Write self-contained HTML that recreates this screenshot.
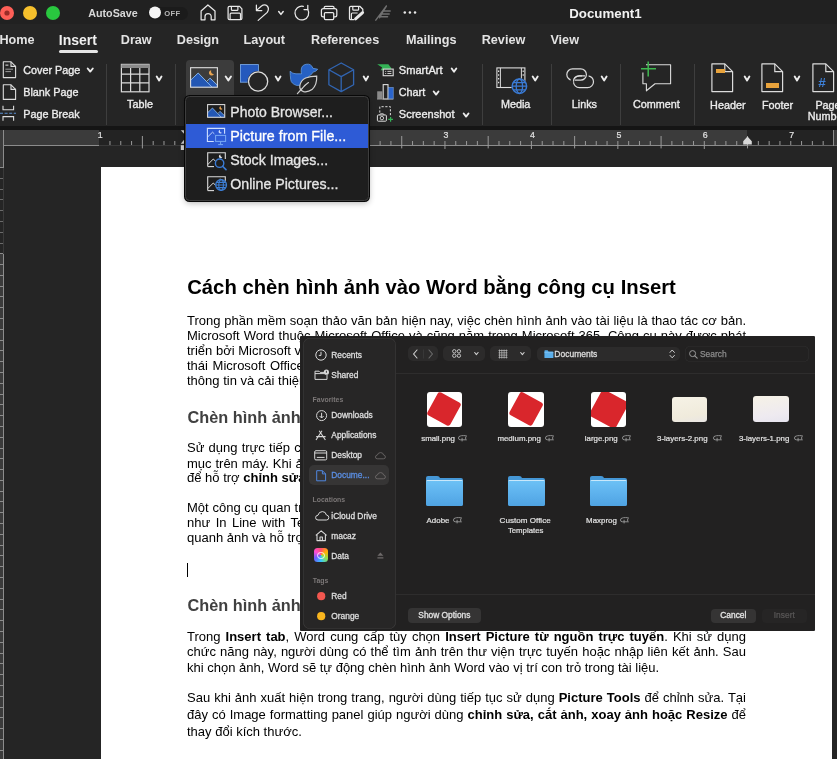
<!DOCTYPE html>
<html><head><meta charset="utf-8"><style>
html,body{margin:0;padding:0;}
body{width:837px;height:759px;overflow:hidden;position:relative;background:#252525;font-family:"Liberation Sans",sans-serif;}
.t{position:absolute;white-space:nowrap;}
svg{overflow:visible;}
</style></head><body>
<div id="w" style="position:absolute;left:0;top:0;width:837px;height:759px;overflow:hidden;will-change:transform;">
<div style="position:absolute;left:0px;top:0px;width:837px;height:24px;background:#212121;"></div>
<svg style="position:absolute;left:0px;top:0px;" width="70" height="27" viewBox="0 0 70 27">
<circle cx="7" cy="13" r="7" fill="#fe5f57"/>
<circle cx="7" cy="13" r="2.6" fill="#9a2c27"/>
<circle cx="30" cy="13" r="7" fill="#f6c02c"/>
<circle cx="53" cy="13" r="7" fill="#29c73f"/>
</svg>
<div class="t" style="left:88.20px;top:8.20px;font-size:10.75px;line-height:10.75px;font-weight:700;color:#d8d8d8;">AutoSave</div>
<div style="position:absolute;left:147.5px;top:6.5px;width:40.0px;height:13.3px;background:#1b1b1b;border-radius:7px;"></div>
<svg style="position:absolute;left:148px;top:6.4px;" width="14" height="13" viewBox="0 0 14 13"><circle cx="7" cy="6.5" r="6" fill="#f4f4f4"/></svg>
<div class="t" style="left:164.30px;top:9.77px;font-size:7.6px;line-height:7.6px;font-weight:700;color:#b8b8b8;letter-spacing:0.3px;">OFF</div>
<svg style="position:absolute;left:0px;top:0px;" width="1" height="1" viewBox="0 0 1 1"><path d="M201.1 19.8 L201.1 11 L207.9 5 L215 11 L215 19.8 L211.2 19.8 L211.2 16.6 A3.1 3.1 0 0 0 205 16.6 L205 19.8 Z" fill="none" stroke="#e8e8e8" stroke-width="1.25" stroke-linejoin="round"/></svg>
<svg style="position:absolute;left:0px;top:0px;" width="1" height="1" viewBox="0 0 1 1"><path d="M229.6 6.3 L239.6 6.3 L241.9 8.8 L241.9 18.3 Q241.9 19.7 240.5 19.7 L229.6 19.7 Q228.1 19.7 228.1 18.3 L228.1 7.8 Q228.1 6.3 229.6 6.3 Z" fill="none" stroke="#e8e8e8" stroke-width="1.25" stroke-linejoin="round"/><path d="M231.4 6.3 L231.4 9.4 Q231.4 10.3 232.3 10.3 L237 10.3 Q237.9 10.3 237.9 9.4 L237.9 6.3" fill="none" stroke="#e8e8e8" stroke-width="1.2"/><path d="M230.1 19.7 L230.1 14.2 Q230.1 13.2 231.1 13.2 L239.5 13.2 Q240.5 13.2 240.5 14.2 L240.5 19.7" fill="none" stroke="#e8e8e8" stroke-width="1.2"/></svg>
<svg style="position:absolute;left:0px;top:0px;" width="1" height="1" viewBox="0 0 1 1"><path d="M256.4 5.2 L256.4 10.5 L261.8 10.5" fill="none" stroke="#e8e8e8" stroke-width="1.25" stroke-linecap="round" stroke-linejoin="round"/><path d="M256.8 10.1 L261.2 6.2 Q264.6 3.8 267.2 6 Q269.6 8.6 267.2 12.4 L258.2 20.4" fill="none" stroke="#e8e8e8" stroke-width="1.25" stroke-linecap="round"/></svg>
<svg style="position:absolute;left:277.2px;top:10.4px;" width="7.900000000000034" height="5.799999999999999" viewBox="0 0 7.900000000000034 5.799999999999999"><path d="M1.7 1.5 L3.950000000000017 4.399999999999999 L6.200000000000034 1.5" fill="none" stroke="#e8e8e8" stroke-width="1.5" stroke-linecap="round" stroke-linejoin="round"/></svg>
<svg style="position:absolute;left:0px;top:0px;" width="1" height="1" viewBox="0 0 1 1"><path d="M303.3 6.3 A6.9 6.9 0 1 0 307.8 9.5" fill="none" stroke="#e8e8e8" stroke-width="1.25" stroke-linecap="round"/><path d="M307.8 5.3 L307.8 9.5 L304 9.5" fill="none" stroke="#e8e8e8" stroke-width="1.25" stroke-linecap="round" stroke-linejoin="round"/></svg>
<svg style="position:absolute;left:0px;top:0px;" width="1" height="1" viewBox="0 0 1 1"><path d="M324.2 8.5 L324.2 7.6 Q324.2 6.3 325.5 6.3 L332.7 6.3 Q334 6.3 334 7.6 L334 8.5" fill="none" stroke="#e8e8e8" stroke-width="1.25"/><path d="M324.3 16.8 L323.3 16.8 Q321.4 16.8 321.4 14.9 L321.4 10.5 Q321.4 8.5 323.4 8.5 L334.8 8.5 Q336.8 8.5 336.8 10.5 L336.8 14.9 Q336.8 16.8 334.9 16.8 L333.8 16.8" fill="none" stroke="#e8e8e8" stroke-width="1.25"/><rect x="324.4" y="12.5" width="9.3" height="7.1" rx="1" fill="none" stroke="#e8e8e8" stroke-width="1.25"/></svg>
<svg style="position:absolute;left:0px;top:0px;" width="1" height="1" viewBox="0 0 1 1"><path d="M354.4 19.7 L350.8 19.7 Q349.5 19.7 349.5 18.4 L349.5 7.6 Q349.5 6.3 350.8 6.3 L359.8 6.3 L362.8 9.3 L362.8 11.6" fill="none" stroke="#e8e8e8" stroke-width="1.25" stroke-linejoin="round"/><path d="M352.8 6.3 L352.8 9.4 Q352.8 10.2 353.6 10.2 L357.8 10.2 Q358.6 10.2 358.6 9.4 L358.6 6.3" fill="none" stroke="#e8e8e8" stroke-width="1.2"/><path d="M351.4 19.7 L351.4 14 Q351.4 13 352.4 13 L357.6 13" fill="none" stroke="#e8e8e8" stroke-width="1.2"/><path d="M355.6 18.8 L362.6 12.6" stroke="#e8e8e8" stroke-width="3" stroke-linecap="round"/></svg>
<svg style="position:absolute;left:0px;top:0px;" width="1" height="1" viewBox="0 0 1 1"><path d="M375.8 20.2 L386.4 6 M386.4 6 Q383 11 379.6 17.8 M382.8 11 L390.2 11 M381.2 14 L389.2 14 M379.6 16.8 L387.6 16.8" fill="none" stroke="#707070" stroke-width="1.4" stroke-linecap="round"/></svg>
<svg style="position:absolute;left:0px;top:0px;" width="1" height="1" viewBox="0 0 1 1"><circle cx="404.8" cy="12.6" r="1.25" fill="#e8e8e8"/><circle cx="409.9" cy="12.6" r="1.25" fill="#e8e8e8"/><circle cx="415" cy="12.6" r="1.25" fill="#e8e8e8"/></svg>
<div class="t" style="left:569.20px;top:6.74px;font-size:13.3px;line-height:13.3px;font-weight:700;color:#f2f2f2;">Document1</div>
<div class="t" style="left:-0.60px;top:33.89px;font-size:12.65px;line-height:12.65px;font-weight:700;color:#e3e3e3;">Home</div>
<div class="t" style="left:58.80px;top:32.75px;font-size:14.0px;line-height:14.0px;font-weight:700;color:#f0f0f0;">Insert</div>
<div class="t" style="left:120.80px;top:33.89px;font-size:12.65px;line-height:12.65px;font-weight:700;color:#e3e3e3;">Draw</div>
<div class="t" style="left:176.80px;top:33.89px;font-size:12.65px;line-height:12.65px;font-weight:700;color:#e3e3e3;">Design</div>
<div class="t" style="left:243.60px;top:33.89px;font-size:12.65px;line-height:12.65px;font-weight:700;color:#e3e3e3;">Layout</div>
<div class="t" style="left:311.00px;top:33.89px;font-size:12.65px;line-height:12.65px;font-weight:700;color:#e3e3e3;">References</div>
<div class="t" style="left:406.00px;top:33.89px;font-size:12.65px;line-height:12.65px;font-weight:700;color:#e3e3e3;">Mailings</div>
<div class="t" style="left:481.70px;top:33.89px;font-size:12.65px;line-height:12.65px;font-weight:700;color:#e3e3e3;">Review</div>
<div class="t" style="left:550.40px;top:33.89px;font-size:12.65px;line-height:12.65px;font-weight:700;color:#e3e3e3;">View</div>
<div style="position:absolute;left:59px;top:50px;width:39px;height:2.799999999999997px;background:#e6e6e6;border-radius:1.5px;"></div>
<div style="position:absolute;left:106.0px;top:63.5px;width:1.0px;height:61.5px;background:#3e3e3e;"></div>
<div style="position:absolute;left:175.1px;top:63.5px;width:1.0px;height:61.5px;background:#3e3e3e;"></div>
<div style="position:absolute;left:482.0px;top:63.5px;width:1.0px;height:61.5px;background:#3e3e3e;"></div>
<div style="position:absolute;left:551.1px;top:63.5px;width:1.0px;height:61.5px;background:#3e3e3e;"></div>
<div style="position:absolute;left:620.4px;top:63.5px;width:1.0px;height:61.5px;background:#3e3e3e;"></div>
<div style="position:absolute;left:694.0px;top:63.5px;width:1.0px;height:61.5px;background:#3e3e3e;"></div>
<svg style="position:absolute;left:2px;top:61px;" width="15" height="18" viewBox="0 0 15 18"><path d="M1.3 0.8 L9 0.8 L13.6 5.4 L13.6 16.6 L1.3 16.6 Z" fill="none" stroke="#dcdcdc" stroke-width="1.1" stroke-linejoin="round"/><path d="M9 0.8 L9 5.4 L13.6 5.4" fill="none" stroke="#dcdcdc" stroke-width="1.1"/><rect x="3.4" y="3.4" width="3" height="1.6" fill="#9a9a9a"/><path d="M3.4 8.2 L11 8.2 M3.4 10.6 L9 10.6" stroke="#9a9a9a" stroke-width="1"/></svg>
<div class="t" style="left:23.20px;top:64.56px;font-size:10.8px;line-height:10.8px;font-weight:400;color:#ececec;-webkit-text-stroke:0.35px #ececec;">Cover Page</div>
<svg style="position:absolute;left:85.7px;top:67.3px;" width="8.5" height="6.0" viewBox="0 0 8.5 6.0"><path d="M1.7 1.5 L4.25 4.6 L6.8 1.5" fill="none" stroke="#ececec" stroke-width="1.9" stroke-linecap="round" stroke-linejoin="round"/></svg>
<svg style="position:absolute;left:2px;top:84px;" width="15" height="17" viewBox="0 0 15 17"><path d="M1.3 0.8 L9 0.8 L13.6 5.4 L13.6 15.4 L1.3 15.4 Z" fill="none" stroke="#dcdcdc" stroke-width="1.1" stroke-linejoin="round"/><path d="M9 0.8 L9 5.4 L13.6 5.4" fill="none" stroke="#dcdcdc" stroke-width="1.1"/></svg>
<div class="t" style="left:23.20px;top:87.36px;font-size:10.8px;line-height:10.8px;font-weight:400;color:#ececec;-webkit-text-stroke:0.35px #ececec;">Blank Page</div>
<svg style="position:absolute;left:0px;top:105px;" width="17" height="17" viewBox="0 0 17 17"><path d="M3 0.8 L3 4.8 L13.6 4.8 L13.6 0.8 M3 15.8 L3 11.6 L13.6 11.6 L13.6 15.8" fill="none" stroke="#dcdcdc" stroke-width="1.1"/><path d="M0 8.2 L16 8.2" stroke="#5b8fd0" stroke-width="1.1" stroke-dasharray="3 1.6"/></svg>
<div class="t" style="left:23.20px;top:109.16px;font-size:10.8px;line-height:10.8px;font-weight:400;color:#ececec;-webkit-text-stroke:0.35px #ececec;">Page Break</div>
<svg style="position:absolute;left:120px;top:63px;" width="31" height="30" viewBox="0 0 31 30"><rect x="1.4" y="1.4" width="27.6" height="27.4" fill="none" stroke="#dcdcdc" stroke-width="1.2"/><rect x="1.4" y="1.4" width="27.6" height="3.6" fill="#8a8a8a"/><path d="M1.4 11.2 L29 11.2 M1.4 19.8 L29 19.8 M10.6 5 L10.6 28.8 M19.8 5 L19.8 28.8" stroke="#dcdcdc" stroke-width="1.2"/></svg>
<svg style="position:absolute;left:155px;top:75px;" width="8.199999999999989" height="6.799999999999997" viewBox="0 0 8.199999999999989 6.799999999999997"><path d="M1.7 1.5 L4.099999999999994 5.399999999999997 L6.4999999999999885 1.5" fill="none" stroke="#ececec" stroke-width="1.9" stroke-linecap="round" stroke-linejoin="round"/></svg>
<div class="t" style="left:127.10px;top:99.16px;font-size:10.8px;line-height:10.8px;font-weight:400;color:#ececec;-webkit-text-stroke:0.35px #ececec;">Table</div>
<div style="position:absolute;left:186px;top:60px;width:48px;height:37px;background:#3c3c3c;border-radius:4px 4px 0 0;"></div>
<svg style="position:absolute;left:0px;top:0px;" width="1" height="1" viewBox="0 0 1 1"><path d="M205.6 87.2 L210.1 78.2 L217.4 85.2 L217.4 87.2 Z" fill="#2357b4"/><path d="M206.5 81.5 L210.1 78.2 L217.4 85.2" fill="none" stroke="#8fc0f5" stroke-width="0.9"/><path d="M190.6 80.2 L198.2 73 L212 87.2 L190.6 87.2 Z" fill="#2357b4"/><path d="M190.6 80.2 L198.2 73 L212 87.2" fill="none" stroke="#8fc0f5" stroke-width="0.9"/><rect x="190.6" y="67.7" width="26.8" height="19.5" fill="none" stroke="#e0e0e0" stroke-width="1.1"/><path d="M211.2 70.2 A2.7 2.7 0 1 0 213.9 74.3 A3.4 3.4 0 0 1 211.2 70.2 Z" fill="#e8a451"/></svg>
<svg style="position:absolute;left:223.6px;top:75px;" width="8.700000000000017" height="6.799999999999997" viewBox="0 0 8.700000000000017 6.799999999999997"><path d="M1.7 1.5 L4.3500000000000085 5.399999999999997 L7.000000000000017 1.5" fill="none" stroke="#ececec" stroke-width="1.9" stroke-linecap="round" stroke-linejoin="round"/></svg>
<svg style="position:absolute;left:239px;top:63px;" width="31" height="31" viewBox="0 0 31 31"><rect x="1.4" y="1.6" width="18" height="17.6" fill="#2559bd" stroke="#7fb0ee" stroke-width="0.8"/><circle cx="19.1" cy="18.5" r="10.6" fill="#252525"/><circle cx="19.1" cy="18.5" r="9.6" fill="none" stroke="#dcdcdc" stroke-width="1.3"/></svg>
<svg style="position:absolute;left:273.8px;top:75px;" width="8.199999999999989" height="6.799999999999997" viewBox="0 0 8.199999999999989 6.799999999999997"><path d="M1.7 1.5 L4.099999999999994 5.399999999999997 L6.4999999999999885 1.5" fill="none" stroke="#ececec" stroke-width="1.9" stroke-linecap="round" stroke-linejoin="round"/></svg>
<svg style="position:absolute;left:0px;top:0px;" width="1" height="1" viewBox="0 0 1 1"><path d="M290.1 71.2 Q292.5 73.8 296 73.8 L301.6 73.8 Q301 72.4 301.2 70.2 A6 6 0 0 1 312.9 68.3 L317.7 69.2 Q316 71.9 313 72.1 Q311.6 75 309.3 75.8 L305 83 Q300.4 86.3 296.6 85.4 Q291.2 83.8 290.7 79.6 Q290.2 75.4 290.1 71.2 Z" fill="#2661c4" stroke="#6aa6ee" stroke-width="0.7"/><path d="M316.7 76.2 Q317.2 84.6 312 89.6 Q308 92.4 303.6 91.6 Q299.4 90.2 299.8 86 Q300.6 80.4 305.6 78 Q310.4 76.2 316.7 76.2 Z" fill="#252525" stroke="#cfcfcf" stroke-width="1.2"/><path d="M297.4 93.6 L302.6 88 Q305 85 308.5 82.6" fill="none" stroke="#cfcfcf" stroke-width="1.2" stroke-linecap="round"/></svg>
<svg style="position:absolute;left:328px;top:62px;" width="27" height="31" viewBox="0 0 27 31"><path d="M13.2 1 L25.6 7.8 L25.6 22.8 L13.2 29.6 L0.9 22.8 L0.9 7.8 Z M0.9 7.8 L13.2 14.6 L25.6 7.8 M13.2 14.6 L13.2 29.6" fill="none" stroke="#3165b2" stroke-width="1.3" stroke-linejoin="round"/></svg>
<svg style="position:absolute;left:362px;top:75px;" width="7.800000000000011" height="6.799999999999997" viewBox="0 0 7.800000000000011 6.799999999999997"><path d="M1.7 1.5 L3.9000000000000057 5.399999999999997 L6.100000000000011 1.5" fill="none" stroke="#ececec" stroke-width="1.9" stroke-linecap="round" stroke-linejoin="round"/></svg>
<svg style="position:absolute;left:0px;top:0px;" width="1" height="1" viewBox="0 0 1 1"><path d="M377.2 64.3 L388.4 64.3 L391.6 68.6 L388.6 70.2 L380.6 70.2 L382.2 67.4 Z" fill="#34b356"/><rect x="383.2" y="69.1" width="10" height="6.6" fill="#252525" stroke="#dcdcdc" stroke-width="1.1"/><path d="M385.2 71.4 L386.2 71.4 M387.4 71.4 L391.4 71.4 M385.2 73.5 L386.2 73.5 M387.4 73.5 L391.4 73.5" stroke="#dcdcdc" stroke-width="0.9"/></svg>
<div class="t" style="left:398.80px;top:64.90px;font-size:11.1px;line-height:11.1px;font-weight:400;color:#ececec;-webkit-text-stroke:0.35px #ececec;">SmartArt</div>
<svg style="position:absolute;left:450px;top:67.4px;" width="8" height="6.199999999999989" viewBox="0 0 8 6.199999999999989"><path d="M1.7 1.5 L4.0 4.799999999999988 L6.3 1.5" fill="none" stroke="#ececec" stroke-width="1.9" stroke-linecap="round" stroke-linejoin="round"/></svg>
<svg style="position:absolute;left:0px;top:0px;" width="1" height="1" viewBox="0 0 1 1"><rect x="377.2" y="91.3" width="5" height="7.8" fill="#8a8a8a"/><rect x="383.2" y="84.6" width="4.8" height="14.4" fill="#252525" stroke="#dcdcdc" stroke-width="1.1"/><rect x="388.6" y="87.5" width="4.6" height="11.6" fill="#2a64cc" stroke="#8ab4ee" stroke-width="0.5"/><path d="M377 99.1 L393.3 99.1" stroke="#9a9a9a" stroke-width="0.8"/></svg>
<div class="t" style="left:398.80px;top:87.46px;font-size:10.8px;line-height:10.8px;font-weight:400;color:#ececec;-webkit-text-stroke:0.35px #ececec;">Chart</div>
<svg style="position:absolute;left:432.2px;top:90px;" width="8.199999999999989" height="6" viewBox="0 0 8.199999999999989 6"><path d="M1.7 1.5 L4.099999999999994 4.6 L6.4999999999999885 1.5" fill="none" stroke="#ececec" stroke-width="1.9" stroke-linecap="round" stroke-linejoin="round"/></svg>
<svg style="position:absolute;left:0px;top:0px;" width="1" height="1" viewBox="0 0 1 1"><path d="M379.8 112.6 L379.8 106.7 L390.4 106.7 L390.4 116.4" fill="none" stroke="#dcdcdc" stroke-width="1" stroke-dasharray="2.2 1.6"/><rect x="377.4" y="115" width="9" height="6.2" rx="0.8" fill="#252525" stroke="#dcdcdc" stroke-width="1"/><circle cx="381.9" cy="118.1" r="1.7" fill="none" stroke="#dcdcdc" stroke-width="0.9"/><path d="M379.6 115 L380.4 113.8 L383.4 113.8 L384.2 115" fill="none" stroke="#dcdcdc" stroke-width="0.9"/><path d="M390.6 117 L390.6 121.8 M388.2 119.4 L393 119.4" stroke="#34b356" stroke-width="1.2"/></svg>
<div class="t" style="left:398.80px;top:108.99px;font-size:11.0px;line-height:11.0px;font-weight:400;color:#ececec;-webkit-text-stroke:0.35px #ececec;">Screenshot</div>
<svg style="position:absolute;left:461.8px;top:112px;" width="8.199999999999989" height="6" viewBox="0 0 8.199999999999989 6"><path d="M1.7 1.5 L4.099999999999994 4.6 L6.4999999999999885 1.5" fill="none" stroke="#ececec" stroke-width="1.9" stroke-linecap="round" stroke-linejoin="round"/></svg>
<svg style="position:absolute;left:496px;top:67px;" width="33" height="29" viewBox="0 0 33 29"><rect x="0.9" y="0.9" width="28" height="19.6" fill="none" stroke="#dcdcdc" stroke-width="1.1"/><path d="M4.4 0.9 L4.4 20.5 M25.4 0.9 L25.4 20.5" stroke="#dcdcdc" stroke-width="1"/><path d="M2.6 3.6 L2.6 18" stroke="#dcdcdc" stroke-width="1.2" stroke-dasharray="1.5 2.2"/><path d="M27.2 3.6 L27.2 11" stroke="#dcdcdc" stroke-width="1.2" stroke-dasharray="1.5 2.2"/><circle cx="23.4" cy="19.2" r="8" fill="#252525"/><circle cx="23.4" cy="19.2" r="7.2" fill="none" stroke="#3a7bd5" stroke-width="1.5"/><ellipse cx="23.4" cy="19.2" rx="3.2" ry="7.2" fill="none" stroke="#3a7bd5" stroke-width="1.3"/><path d="M16.2 19.2 L30.6 19.2 M17.2 15.6 L29.6 15.6 M17.2 22.8 L29.6 22.8" stroke="#3a7bd5" stroke-width="1.2"/></svg>
<svg style="position:absolute;left:530.8px;top:75px;" width="8.400000000000091" height="6.799999999999997" viewBox="0 0 8.400000000000091 6.799999999999997"><path d="M1.7 1.5 L4.2000000000000455 5.399999999999997 L6.700000000000091 1.5" fill="none" stroke="#ececec" stroke-width="1.9" stroke-linecap="round" stroke-linejoin="round"/></svg>
<div class="t" style="left:500.90px;top:99.16px;font-size:10.8px;line-height:10.8px;font-weight:400;color:#ececec;-webkit-text-stroke:0.35px #ececec;">Media</div>
<svg style="position:absolute;left:0px;top:0px;" width="1" height="1" viewBox="0 0 1 1"><rect x="573.5" y="75.8" width="20" height="11.8" rx="5.9" fill="none" stroke="#dcdcdc" stroke-width="1.2"/><rect x="585" y="73.6" width="3.6" height="3.8" fill="#252525"/><rect x="566.8" y="68.8" width="19.6" height="11.4" rx="5.7" fill="none" stroke="#dcdcdc" stroke-width="1.2"/><rect x="570.6" y="78.6" width="4.2" height="3.6" fill="#252525"/><path d="M573.5 81.7 Q573.5 75.8 579.4 75.8 L582 75.8" fill="none" stroke="#dcdcdc" stroke-width="1.2"/></svg>
<svg style="position:absolute;left:599.7px;top:75px;" width="8.299999999999955" height="6.799999999999997" viewBox="0 0 8.299999999999955 6.799999999999997"><path d="M1.7 1.5 L4.149999999999977 5.399999999999997 L6.599999999999954 1.5" fill="none" stroke="#ececec" stroke-width="1.9" stroke-linecap="round" stroke-linejoin="round"/></svg>
<div class="t" style="left:571.80px;top:99.16px;font-size:10.8px;line-height:10.8px;font-weight:400;color:#ececec;-webkit-text-stroke:0.35px #ececec;">Links</div>
<svg style="position:absolute;left:640px;top:61px;" width="33" height="32" viewBox="0 0 33 32"><path d="M6 3.8 L30.6 3.8 L30.6 22.8 L15 22.8 L6.4 29.8 L6.4 22.8 L2.9 22.8 L2.9 11.6" fill="none" stroke="#dcdcdc" stroke-width="1.1" stroke-linejoin="round"/><path d="M1 7.8 L16 7.8 M8.2 0.6 L8.2 15.6" stroke="#3fb850" stroke-width="1.5"/></svg>
<div class="t" style="left:632.90px;top:99.16px;font-size:10.8px;line-height:10.8px;font-weight:400;color:#ececec;-webkit-text-stroke:0.35px #ececec;">Comment</div>
<svg style="position:absolute;left:711px;top:63px;" width="23" height="30" viewBox="0 0 23 30"><path d="M0.9 0.9 L13.8 0.9 L21.6 8.6 L21.6 28.6 L0.9 28.6 Z" fill="none" stroke="#dcdcdc" stroke-width="1.2" stroke-linejoin="round"/><path d="M13.8 0.9 L13.8 8.6 L21.6 8.6" fill="none" stroke="#dcdcdc" stroke-width="1.2"/></svg>
<div style="position:absolute;left:716px;top:68.8px;width:8.799999999999955px;height:4.0px;background:#e8a33c;"></div>
<svg style="position:absolute;left:742.9px;top:75.3px;" width="8.100000000000023" height="6.900000000000006" viewBox="0 0 8.100000000000023 6.900000000000006"><path d="M1.7 1.5 L4.050000000000011 5.500000000000005 L6.400000000000023 1.5" fill="none" stroke="#ececec" stroke-width="1.9" stroke-linecap="round" stroke-linejoin="round"/></svg>
<div class="t" style="left:710.10px;top:99.66px;font-size:10.8px;line-height:10.8px;font-weight:400;color:#ececec;-webkit-text-stroke:0.35px #ececec;">Header</div>
<svg style="position:absolute;left:761.2px;top:63px;" width="23" height="30" viewBox="0 0 23 30"><path d="M0.9 0.9 L13.8 0.9 L21.6 8.6 L21.6 28.6 L0.9 28.6 Z" fill="none" stroke="#dcdcdc" stroke-width="1.2" stroke-linejoin="round"/><path d="M13.8 0.9 L13.8 8.6 L21.6 8.6" fill="none" stroke="#dcdcdc" stroke-width="1.2"/></svg>
<div style="position:absolute;left:766.3px;top:83.2px;width:13.200000000000045px;height:4.599999999999994px;background:#e8a33c;"></div>
<svg style="position:absolute;left:793px;top:75.3px;" width="8" height="6.900000000000006" viewBox="0 0 8 6.900000000000006"><path d="M1.7 1.5 L4.0 5.500000000000005 L6.3 1.5" fill="none" stroke="#ececec" stroke-width="1.9" stroke-linecap="round" stroke-linejoin="round"/></svg>
<div class="t" style="left:762.00px;top:99.66px;font-size:10.8px;line-height:10.8px;font-weight:400;color:#ececec;-webkit-text-stroke:0.35px #ececec;">Footer</div>
<svg style="position:absolute;left:811.5px;top:63px;" width="23" height="30" viewBox="0 0 23 30"><path d="M0.9 0.9 L13.8 0.9 L21.6 8.6 L21.6 28.6 L0.9 28.6 Z" fill="none" stroke="#dcdcdc" stroke-width="1.2" stroke-linejoin="round"/><path d="M13.8 0.9 L13.8 8.6 L21.6 8.6" fill="none" stroke="#dcdcdc" stroke-width="1.2"/></svg>
<div class="t" style="left:818.20px;top:76.17px;font-size:13.5px;line-height:13.5px;font-weight:700;color:#3d7fd6;">#</div>
<div class="t" style="left:815.40px;top:99.66px;font-size:10.8px;line-height:10.8px;font-weight:400;color:#ececec;-webkit-text-stroke:0.35px #ececec;">Page</div>
<div class="t" style="left:807.80px;top:111.06px;font-size:10.8px;line-height:10.8px;font-weight:400;color:#ececec;-webkit-text-stroke:0.35px #ececec;">Number</div>
<div style="position:absolute;left:0px;top:126px;width:837px;height:4px;background:#151515;"></div>
<div style="position:absolute;left:0px;top:130px;width:837px;height:16px;background:#232323;"></div>
<div style="position:absolute;left:4px;top:130px;width:95px;height:15px;background:#3b3b3b;"></div>
<div style="position:absolute;left:185.6px;top:130px;width:561.9px;height:15px;background:#3b3b3b;"></div>
<div style="position:absolute;left:833.5px;top:130px;width:3.5px;height:15px;background:#3b3b3b;"></div>
<div style="position:absolute;left:4px;top:145px;width:95px;height:1px;background:#8c8c8c;"></div>
<div style="position:absolute;left:185.2px;top:145px;width:562.3px;height:1px;background:#8c8c8c;"></div>
<div style="position:absolute;left:747.5px;top:145px;width:89.5px;height:1px;background:#6a6a6a;"></div>
<div style="position:absolute;left:99px;top:145px;width:86.19999999999999px;height:1px;background:#3a3a3a;"></div>
<div style="position:absolute;left:833px;top:130px;width:1px;height:16px;background:#8c8c8c;"></div>
<div style="position:absolute;left:0px;top:130px;width:3.4px;height:37px;background:#3b3b3b;"></div>
<div style="position:absolute;left:3.2px;top:130px;width:1.0px;height:37.5px;background:#8c8c8c;"></div>
<div style="position:absolute;left:0px;top:166.5px;width:4.2px;height:1.0px;background:#8c8c8c;"></div>
<div style="position:absolute;left:3.2px;top:167.5px;width:1.0px;height:86.0px;background:#3a3a3a;"></div>
<div style="position:absolute;left:0px;top:253.5px;width:3.3px;height:505.5px;background:#3b3b3b;"></div>
<div style="position:absolute;left:3.2px;top:253.5px;width:1.0px;height:505.5px;background:#8c8c8c;"></div>
<div style="position:absolute;left:0px;top:177.79px;width:3.3px;height:1.0px;background:#6a6a6a;"></div>
<div style="position:absolute;left:0px;top:188.57999999999998px;width:3.3px;height:1.0px;background:#6a6a6a;"></div>
<div style="position:absolute;left:0px;top:199.37px;width:3.3px;height:1.0px;background:#6a6a6a;"></div>
<div style="position:absolute;left:0px;top:210.16px;width:3.3px;height:1.0px;background:#6a6a6a;"></div>
<div style="position:absolute;left:0px;top:220.95px;width:3.3px;height:1.0px;background:#6a6a6a;"></div>
<div style="position:absolute;left:0px;top:231.74px;width:3.3px;height:1.0px;background:#6a6a6a;"></div>
<div style="position:absolute;left:0px;top:242.53px;width:3.3px;height:1.0px;background:#6a6a6a;"></div>
<div style="position:absolute;left:0px;top:253.32px;width:3.3px;height:1.0px;background:#8c8c8c;"></div>
<div style="position:absolute;left:0px;top:264.11px;width:3.3px;height:1.0px;background:#8c8c8c;"></div>
<div style="position:absolute;left:0px;top:274.9px;width:3.3px;height:1.0px;background:#8c8c8c;"></div>
<div style="position:absolute;left:0px;top:285.69px;width:3.3px;height:1.0px;background:#8c8c8c;"></div>
<div style="position:absolute;left:0px;top:296.48px;width:3.3px;height:1.0px;background:#8c8c8c;"></div>
<div style="position:absolute;left:0px;top:307.27px;width:3.3px;height:1.0px;background:#8c8c8c;"></div>
<div style="position:absolute;left:0px;top:318.06px;width:3.3px;height:1.0px;background:#8c8c8c;"></div>
<div style="position:absolute;left:0px;top:328.85px;width:3.3px;height:1.0px;background:#8c8c8c;"></div>
<div style="position:absolute;left:0px;top:339.64px;width:3.3px;height:1.0px;background:#8c8c8c;"></div>
<div style="position:absolute;left:0px;top:350.42999999999995px;width:3.3px;height:1.0px;background:#8c8c8c;"></div>
<div style="position:absolute;left:0px;top:361.21999999999997px;width:3.3px;height:1.0px;background:#8c8c8c;"></div>
<div style="position:absolute;left:0px;top:372.01px;width:3.3px;height:1.0px;background:#8c8c8c;"></div>
<div style="position:absolute;left:0px;top:382.79999999999995px;width:3.3px;height:1.0px;background:#8c8c8c;"></div>
<div style="position:absolute;left:0px;top:393.59px;width:3.3px;height:1.0px;background:#8c8c8c;"></div>
<div style="position:absolute;left:0px;top:404.38px;width:3.3px;height:1.0px;background:#8c8c8c;"></div>
<div style="position:absolute;left:0px;top:415.16999999999996px;width:3.3px;height:1.0px;background:#8c8c8c;"></div>
<div style="position:absolute;left:0px;top:425.96px;width:3.3px;height:1.0px;background:#8c8c8c;"></div>
<div style="position:absolute;left:0px;top:436.75px;width:3.3px;height:1.0px;background:#8c8c8c;"></div>
<div style="position:absolute;left:0px;top:447.53999999999996px;width:3.3px;height:1.0px;background:#8c8c8c;"></div>
<div style="position:absolute;left:0px;top:458.33px;width:3.3px;height:1.0px;background:#8c8c8c;"></div>
<div style="position:absolute;left:0px;top:469.12px;width:3.3px;height:1.0px;background:#8c8c8c;"></div>
<div style="position:absolute;left:0px;top:479.90999999999997px;width:3.3px;height:1.0px;background:#8c8c8c;"></div>
<div style="position:absolute;left:0px;top:490.7px;width:3.3px;height:1.0px;background:#8c8c8c;"></div>
<div style="position:absolute;left:0px;top:501.48999999999995px;width:3.3px;height:1.0px;background:#8c8c8c;"></div>
<div style="position:absolute;left:0px;top:512.28px;width:3.3px;height:1.0px;background:#8c8c8c;"></div>
<div style="position:absolute;left:0px;top:523.0699999999999px;width:3.3px;height:1.0px;background:#8c8c8c;"></div>
<div style="position:absolute;left:0px;top:533.8599999999999px;width:3.3px;height:1.0px;background:#8c8c8c;"></div>
<div style="position:absolute;left:0px;top:544.65px;width:3.3px;height:1.0px;background:#8c8c8c;"></div>
<div style="position:absolute;left:0px;top:555.4399999999999px;width:3.3px;height:1.0px;background:#8c8c8c;"></div>
<div style="position:absolute;left:0px;top:566.23px;width:3.3px;height:1.0px;background:#8c8c8c;"></div>
<div style="position:absolute;left:0px;top:577.02px;width:3.3px;height:1.0px;background:#8c8c8c;"></div>
<div style="position:absolute;left:0px;top:587.81px;width:3.3px;height:1.0px;background:#8c8c8c;"></div>
<div style="position:absolute;left:0px;top:598.5999999999999px;width:3.3px;height:1.0px;background:#8c8c8c;"></div>
<div style="position:absolute;left:0px;top:609.39px;width:3.3px;height:1.0px;background:#8c8c8c;"></div>
<div style="position:absolute;left:0px;top:620.18px;width:3.3px;height:1.0px;background:#8c8c8c;"></div>
<div style="position:absolute;left:0px;top:630.97px;width:3.3px;height:1.0px;background:#8c8c8c;"></div>
<div style="position:absolute;left:0px;top:641.76px;width:3.3px;height:1.0px;background:#8c8c8c;"></div>
<div style="position:absolute;left:0px;top:652.55px;width:3.3px;height:1.0px;background:#8c8c8c;"></div>
<div style="position:absolute;left:0px;top:663.3399999999999px;width:3.3px;height:1.0px;background:#8c8c8c;"></div>
<div style="position:absolute;left:0px;top:674.1299999999999px;width:3.3px;height:1.0px;background:#8c8c8c;"></div>
<div style="position:absolute;left:0px;top:684.92px;width:3.3px;height:1.0px;background:#8c8c8c;"></div>
<div style="position:absolute;left:0px;top:695.7099999999999px;width:3.3px;height:1.0px;background:#8c8c8c;"></div>
<div style="position:absolute;left:0px;top:706.5px;width:3.3px;height:1.0px;background:#8c8c8c;"></div>
<div style="position:absolute;left:0px;top:717.29px;width:3.3px;height:1.0px;background:#8c8c8c;"></div>
<div style="position:absolute;left:0px;top:728.0799999999999px;width:3.3px;height:1.0px;background:#8c8c8c;"></div>
<div style="position:absolute;left:0px;top:738.87px;width:3.3px;height:1.0px;background:#8c8c8c;"></div>
<div style="position:absolute;left:0px;top:749.66px;width:3.3px;height:1.0px;background:#8c8c8c;"></div>
<svg style="position:absolute;left:0px;top:0px;pointer-events:none;" width="837" height="160" viewBox="0 0 837 160"><rect x="109.46" y="141" width="1" height="4" fill="#9a9a9a"/><rect x="120.26" y="141" width="1" height="4" fill="#9a9a9a"/><rect x="131.07" y="141" width="1" height="4" fill="#9a9a9a"/><rect x="141.88" y="136" width="1" height="12.4" fill="#9a9a9a"/><rect x="152.68" y="141" width="1" height="4" fill="#9a9a9a"/><rect x="163.49" y="141" width="1" height="4" fill="#9a9a9a"/><rect x="174.29" y="141" width="1" height="4" fill="#9a9a9a"/><rect x="195.91" y="141" width="1" height="4" fill="#9a9a9a"/><rect x="206.71" y="141" width="1" height="4" fill="#9a9a9a"/><rect x="217.52" y="141" width="1" height="4" fill="#9a9a9a"/><rect x="228.32" y="136" width="1" height="12.4" fill="#9a9a9a"/><rect x="239.13" y="141" width="1" height="4" fill="#9a9a9a"/><rect x="249.94" y="141" width="1" height="4" fill="#9a9a9a"/><rect x="260.74" y="141" width="1" height="4" fill="#9a9a9a"/><rect x="271.55" y="141" width="1" height="8" fill="#9a9a9a"/><rect x="282.36" y="141" width="1" height="4" fill="#9a9a9a"/><rect x="293.16" y="141" width="1" height="4" fill="#9a9a9a"/><rect x="303.97" y="141" width="1" height="4" fill="#9a9a9a"/><rect x="314.77" y="136" width="1" height="12.4" fill="#9a9a9a"/><rect x="325.58" y="141" width="1" height="4" fill="#9a9a9a"/><rect x="336.39" y="141" width="1" height="4" fill="#9a9a9a"/><rect x="347.19" y="141" width="1" height="4" fill="#9a9a9a"/><rect x="358.00" y="141" width="1" height="8" fill="#9a9a9a"/><rect x="368.81" y="141" width="1" height="4" fill="#9a9a9a"/><rect x="379.61" y="141" width="1" height="4" fill="#9a9a9a"/><rect x="390.42" y="141" width="1" height="4" fill="#9a9a9a"/><rect x="401.23" y="136" width="1" height="12.4" fill="#9a9a9a"/><rect x="412.03" y="141" width="1" height="4" fill="#9a9a9a"/><rect x="422.84" y="141" width="1" height="4" fill="#9a9a9a"/><rect x="433.64" y="141" width="1" height="4" fill="#9a9a9a"/><rect x="444.45" y="141" width="1" height="8" fill="#9a9a9a"/><rect x="455.26" y="141" width="1" height="4" fill="#9a9a9a"/><rect x="466.06" y="141" width="1" height="4" fill="#9a9a9a"/><rect x="476.87" y="141" width="1" height="4" fill="#9a9a9a"/><rect x="487.67" y="136" width="1" height="12.4" fill="#9a9a9a"/><rect x="498.48" y="141" width="1" height="4" fill="#9a9a9a"/><rect x="509.29" y="141" width="1" height="4" fill="#9a9a9a"/><rect x="520.09" y="141" width="1" height="4" fill="#9a9a9a"/><rect x="530.90" y="141" width="1" height="8" fill="#9a9a9a"/><rect x="541.71" y="141" width="1" height="4" fill="#9a9a9a"/><rect x="552.51" y="141" width="1" height="4" fill="#9a9a9a"/><rect x="563.32" y="141" width="1" height="4" fill="#9a9a9a"/><rect x="574.12" y="136" width="1" height="12.4" fill="#9a9a9a"/><rect x="584.93" y="141" width="1" height="4" fill="#9a9a9a"/><rect x="595.74" y="141" width="1" height="4" fill="#9a9a9a"/><rect x="606.54" y="141" width="1" height="4" fill="#9a9a9a"/><rect x="617.35" y="141" width="1" height="8" fill="#9a9a9a"/><rect x="628.16" y="141" width="1" height="4" fill="#9a9a9a"/><rect x="638.96" y="141" width="1" height="4" fill="#9a9a9a"/><rect x="649.77" y="141" width="1" height="4" fill="#9a9a9a"/><rect x="660.58" y="136" width="1" height="12.4" fill="#9a9a9a"/><rect x="671.38" y="141" width="1" height="4" fill="#9a9a9a"/><rect x="682.19" y="141" width="1" height="4" fill="#9a9a9a"/><rect x="692.99" y="141" width="1" height="4" fill="#9a9a9a"/><rect x="703.80" y="141" width="1" height="8" fill="#9a9a9a"/><rect x="714.61" y="141" width="1" height="4" fill="#9a9a9a"/><rect x="725.41" y="141" width="1" height="4" fill="#9a9a9a"/><rect x="736.22" y="141" width="1" height="4" fill="#9a9a9a"/><rect x="747.03" y="136" width="1" height="12.4" fill="#9a9a9a"/><rect x="757.83" y="141" width="1" height="4" fill="#9a9a9a"/><rect x="768.64" y="141" width="1" height="4" fill="#9a9a9a"/><rect x="779.44" y="141" width="1" height="4" fill="#9a9a9a"/><rect x="790.25" y="141" width="1" height="4" fill="#9a9a9a"/><rect x="801.06" y="141" width="1" height="4" fill="#9a9a9a"/><rect x="811.86" y="141" width="1" height="4" fill="#9a9a9a"/><rect x="822.67" y="141" width="1" height="4" fill="#9a9a9a"/></svg>
<div class="t" style="left:97.70px;top:130.55px;font-size:8.8px;line-height:8.8px;font-weight:400;color:#e2e2e2;-webkit-text-stroke:0.2px #e2e2e2;">1</div>
<div class="t" style="left:270.60px;top:130.55px;font-size:8.8px;line-height:8.8px;font-weight:400;color:#e2e2e2;-webkit-text-stroke:0.2px #e2e2e2;">1</div>
<div class="t" style="left:357.05px;top:130.55px;font-size:8.8px;line-height:8.8px;font-weight:400;color:#e2e2e2;-webkit-text-stroke:0.2px #e2e2e2;">2</div>
<div class="t" style="left:443.50px;top:130.55px;font-size:8.8px;line-height:8.8px;font-weight:400;color:#e2e2e2;-webkit-text-stroke:0.2px #e2e2e2;">3</div>
<div class="t" style="left:529.95px;top:130.55px;font-size:8.8px;line-height:8.8px;font-weight:400;color:#e2e2e2;-webkit-text-stroke:0.2px #e2e2e2;">4</div>
<div class="t" style="left:616.40px;top:130.55px;font-size:8.8px;line-height:8.8px;font-weight:400;color:#e2e2e2;-webkit-text-stroke:0.2px #e2e2e2;">5</div>
<div class="t" style="left:702.85px;top:130.55px;font-size:8.8px;line-height:8.8px;font-weight:400;color:#e2e2e2;-webkit-text-stroke:0.2px #e2e2e2;">6</div>
<div class="t" style="left:789.30px;top:130.55px;font-size:8.8px;line-height:8.8px;font-weight:400;color:#e2e2e2;-webkit-text-stroke:0.2px #e2e2e2;">7</div>
<svg style="position:absolute;left:0px;top:0px;" width="1" height="1" viewBox="0 0 1 1"><path d="M180.8 130.2 L185.6 130.2 L185.6 135.6 Z" fill="#d0d0d0"/><path d="M185.6 137.8 L185.6 143.8 L180.8 143.8 Z" fill="#d0d0d0"/><rect x="180.8" y="145.2" width="4.8" height="4.8" fill="#d0d0d0"/></svg>
<svg style="position:absolute;left:0px;top:0px;" width="1" height="1" viewBox="0 0 1 1"><path d="M747.5 136.6 L751.8 141.2 L751.8 144.4 L743.2 144.4 L743.2 141.2 Z" fill="#d8d8d8"/></svg>
<div style="position:absolute;left:101.2px;top:167px;width:730.8px;height:592px;background:#ffffff;"></div>
<div class="t" style="left:187.20px;top:276.72px;font-size:20.3px;line-height:20.3px;font-weight:700;color:#000;">Cách chèn hình ảnh vào Word bằng công cụ Insert</div>
<div class="t" style="left:187.0px;top:313.70px;width:559.0px;font-size:13px;line-height:13px;color:#000;text-align:justify;text-align-last:justify;">Trong phần mềm soạn thảo văn bản hiện nay, việc chèn hình ảnh vào tài liệu là thao tác cơ bản.</div>
<div class="t" style="left:187.0px;top:328.80px;width:559.0px;font-size:13px;line-height:13px;color:#000;text-align:justify;text-align-last:justify;">Microsoft Word thuộc Microsoft Office và cũng nằm trong Microsoft 365. Công cụ này được phát</div>
<div class="t" style="left:187.0px;top:343.80px;width:559.0px;font-size:13px;line-height:13px;color:#000;text-align:justify;text-align-last:justify;">triển bởi Microsoft với nhiều tính năng hỗ trợ soạn thảo, định dạng và trình bày nội dung trong hệ</div>
<div class="t" style="left:187.0px;top:358.90px;width:559.0px;font-size:13px;line-height:13px;color:#000;text-align:justify;text-align-last:justify;">thái Microsoft Office giúp người dùng dễ dàng tạo tài liệu chuyên nghiệp, trình bày rõ ràng các</div>
<div class="t" style="left:187.0px;top:373.90px;width:559.0px;font-size:13px;line-height:13px;color:#000;">thông tin và cải thiện hiệu quả công việc.</div>
<div class="t" style="left:187.60px;top:409.10px;font-size:16.3px;line-height:16.3px;font-weight:700;color:#404040;">Chèn hình ảnh từ máy tính</div>
<div class="t" style="left:187.0px;top:441.00px;width:559.0px;font-size:13px;line-height:13px;color:#000;text-align:justify;text-align-last:justify;">Sử dụng trực tiếp công cụ Insert Picture giúp người dùng chèn nhanh ảnh có sẵn trong các thư</div>
<div class="t" style="left:187.0px;top:456.50px;width:559.0px;font-size:13px;line-height:13px;color:#000;text-align:justify;text-align-last:justify;">mục trên máy. Khi ảnh được chèn vào tài liệu, Word sẽ cung cấp thêm nhiều công cụ khác nhau</div>
<div class="t" style="left:187.0px;top:471.00px;width:559.0px;font-size:13px;line-height:13px;color:#000;">để hỗ trợ <b>chỉnh sửa</b> hình ảnh theo nhu cầu.</div>
<div class="t" style="left:187.0px;top:501.10px;width:559.0px;font-size:13px;line-height:13px;color:#000;text-align:justify;text-align-last:justify;">Một công cụ quan trọng là Layout Options, cho phép người dùng lựa chọn nhanh cách bố trí ảnh</div>
<div class="t" style="left:187.0px;top:515.90px;width:559.0px;font-size:13px;line-height:13px;color:#000;text-align:justify;text-align-last:justify;">như In Line with Text, Square, Tight, Through hoặc Behind Text giúp điều chỉnh văn bản bao</div>
<div class="t" style="left:187.0px;top:531.20px;width:559.0px;font-size:13px;line-height:13px;color:#000;">quanh ảnh và hỗ trợ trình bày tài liệu đẹp mắt hơn.</div>
<div style="position:absolute;left:187px;top:562.5px;width:1.1999999999999886px;height:14.0px;background:#000;"></div>
<div class="t" style="left:187.60px;top:597.00px;font-size:16.3px;line-height:16.3px;font-weight:700;color:#404040;">Chèn hình ảnh trực tuyến</div>
<div class="t" style="left:187.0px;top:629.50px;width:559.0px;font-size:13px;line-height:13px;color:#000;text-align:justify;text-align-last:justify;">Trong <b>Insert tab</b>, Word cung cấp tùy chọn <b>Insert Picture từ nguồn trực tuyến</b>. Khi sử dụng</div>
<div class="t" style="left:187.0px;top:644.80px;width:559.0px;font-size:13px;line-height:13px;color:#000;text-align:justify;text-align-last:justify;">chức năng này, người dùng có thể tìm ảnh trên thư viện trực tuyến hoặc nhập liên kết ảnh. Sau</div>
<div class="t" style="left:187.0px;top:660.50px;width:559.0px;font-size:13px;line-height:13px;color:#000;">khi chọn ảnh, Word sẽ tự động chèn hình ảnh Word vào vị trí con trỏ trong tài liệu.</div>
<div class="t" style="left:187.0px;top:691.00px;width:559.0px;font-size:13px;line-height:13px;color:#000;text-align:justify;text-align-last:justify;">Sau khi ảnh xuất hiện trong trang, người dùng tiếp tục sử dụng <b>Picture Tools</b> để chỉnh sửa. Tại</div>
<div class="t" style="left:187.0px;top:707.90px;width:559.0px;font-size:13px;line-height:13px;color:#000;text-align:justify;text-align-last:justify;">đây có Image formatting panel giúp người dùng <b>chỉnh sửa, cắt ảnh, xoay ảnh hoặc Resize</b> để</div>
<div class="t" style="left:187.0px;top:724.70px;width:559.0px;font-size:13px;line-height:13px;color:#000;">thay đổi kích thước.</div>
<div style="position:absolute;left:185.3px;top:96px;width:183.7px;height:104.6px;background:#1e1e1e;border:1px solid #3e3e3e;border-radius:4.5px;box-sizing:border-box;box-shadow:0 0 0 1px #080808, 0 2px 6px rgba(0,0,0,0.3);"></div>
<div style="position:absolute;left:186.2px;top:124px;width:181.90000000000003px;height:24px;background:#2e5bd6;"></div>
<svg style="position:absolute;left:0px;top:0px;" width="1" height="1" viewBox="0 0 1 1"><g transform="translate(207.6 104.6) scale(0.64 0.65) translate(-190.6 -67.7)"><path d="M205.6 87.2 L210.1 78.2 L217.4 85.2 L217.4 87.2 Z" fill="#2357b4"/><path d="M206.5 81.5 L210.1 78.2 L217.4 85.2" fill="none" stroke="#8fc0f5" stroke-width="1.2"/><path d="M190.6 80.2 L198.2 73 L212 87.2 L190.6 87.2 Z" fill="#2357b4"/><path d="M190.6 80.2 L198.2 73 L212 87.2" fill="none" stroke="#8fc0f5" stroke-width="1.2"/><rect x="190.6" y="67.7" width="26.8" height="19.5" fill="none" stroke="#e0e0e0" stroke-width="1.6"/><path d="M211.2 70.2 A2.7 2.7 0 1 0 213.9 74.3 A3.4 3.4 0 0 1 211.2 70.2 Z" fill="#e8a451"/></g></svg>
<div class="t" style="left:230.30px;top:105.15px;font-size:14px;line-height:14px;font-weight:400;color:#e6e6e6;-webkit-text-stroke:0.3px #e6e6e6;">Photo Browser...</div>
<svg style="position:absolute;left:0px;top:0px;" width="1" height="1" viewBox="0 0 1 1"><path d="M213.8 141.5 L207.4 141.5 L207.4 128.4 L224.6 128.4 L224.6 133.8" fill="none" stroke="#d0e0ff" stroke-width="1.1"/><path d="M207.8 136.8 L212.5 132.2 L214.3 133.8" fill="none" stroke="#d0e0ff" stroke-width="0.9"/><path d="M220 129.8 A1.9 1.9 0 1 0 222 132.8 A2.4 2.4 0 0 1 220 129.8 Z" fill="#d0e0ff"/><rect x="215.6" y="135.4" width="10" height="6" fill="#2e5bd6" stroke="#7aaaf4" stroke-width="1"/><path d="M220.6 141.4 L220.6 144.2 M218.2 144.6 L223 144.6" stroke="#7aaaf4" stroke-width="1"/></svg>
<div class="t" style="left:230.30px;top:128.70px;font-size:14.3px;line-height:14.3px;font-weight:400;color:#ffffff;-webkit-text-stroke:0.3px #ffffff;">Picture from File...</div>
<svg style="position:absolute;left:206.5px;top:151.5px;" width="21" height="19" viewBox="0 0 21 19"><path d="M0.7 14.6 L0.7 0.7 L18.3 0.7 L18.3 7" fill="none" stroke="#dcdcdc" stroke-width="1.1"/><path d="M0.7 14.6 L7 14.6" stroke="#dcdcdc" stroke-width="1.1"/><path d="M0.9 12.4 L6.3 7 L9.2 9.9" fill="none" stroke="#dcdcdc" stroke-width="1"/><path d="M13.6 2.6 A1.8 1.8 0 1 0 15.4 4.8 A1.5 1.5 0 0 1 13.6 2.6 Z" fill="#dcdcdc"/><circle cx="12.6" cy="11.2" r="4.2" fill="#1e1e1e" stroke="#3a7bd5" stroke-width="1.4"/><path d="M15.6 14.2 L19 17.6" stroke="#3a7bd5" stroke-width="1.6" stroke-linecap="round"/></svg>
<div class="t" style="left:230.30px;top:152.98px;font-size:14.2px;line-height:14.2px;font-weight:400;color:#e6e6e6;-webkit-text-stroke:0.3px #e6e6e6;">Stock Images...</div>
<svg style="position:absolute;left:206.5px;top:175.5px;" width="21" height="19" viewBox="0 0 21 19"><path d="M0.7 14.6 L0.7 0.7 L18.3 0.7 L18.3 7" fill="none" stroke="#dcdcdc" stroke-width="1.1"/><path d="M0.7 14.6 L7 14.6" stroke="#dcdcdc" stroke-width="1.1"/><path d="M0.9 12.4 L6.3 7 L9.2 9.9" fill="none" stroke="#dcdcdc" stroke-width="1"/><path d="M13.6 2.6 A1.8 1.8 0 1 0 15.4 4.8 A1.5 1.5 0 0 1 13.6 2.6 Z" fill="#dcdcdc"/><circle cx="14.1" cy="9" r="6" fill="#1e1e1e"/><circle cx="14.1" cy="9" r="5.4" fill="none" stroke="#3d7fd6" stroke-width="1.3"/><ellipse cx="14.1" cy="9" rx="2.3" ry="5.4" fill="none" stroke="#3d7fd6" stroke-width="1.1"/><path d="M8.8 9 L19.4 9 M9.6 6.4 L18.6 6.4 M9.6 11.6 L18.6 11.6" stroke="#3d7fd6" stroke-width="1.1"/></svg>
<div class="t" style="left:230.30px;top:176.78px;font-size:14.2px;line-height:14.2px;font-weight:400;color:#e6e6e6;-webkit-text-stroke:0.3px #e6e6e6;">Online Pictures...</div>
<div style="position:absolute;left:300.4px;top:335.5px;width:514.6px;height:295.0px;background:#222121;border-radius:1px;"></div>
<div style="position:absolute;left:303.3px;top:338px;width:92.30000000000001px;height:291px;background:#272626;border-radius:7px;box-shadow:inset 0 0 0 0.6px #3c3b3b;"></div>
<svg style="position:absolute;left:315px;top:349px;" width="13" height="13" viewBox="0 0 13 13"><circle cx="6" cy="6" r="5.2" fill="none" stroke="#d8d8d8" stroke-width="1"/><path d="M6 2.8 L6 6.4 L3.8 6.4" fill="none" stroke="#d8d8d8" stroke-width="1"/></svg>
<div class="t" style="left:331.30px;top:351.19px;font-size:8.4px;line-height:8.4px;font-weight:400;color:#dedede;-webkit-text-stroke:0.3px #dedede;">Recents</div>
<svg style="position:absolute;left:313.5px;top:369px;" width="16" height="12" viewBox="0 0 16 12"><path d="M1 2.2 L1 10.4 L13 10.4 L13 6 M1 2.2 L5 2.2 L6.2 3.4 L10 3.4 M1 4.6 L10 4.6" fill="none" stroke="#d8d8d8" stroke-width="1"/><circle cx="12.4" cy="3.2" r="2.6" fill="#d8d8d8"/><path d="M12.4 1.8 L12.4 3.8" stroke="#2a2727" stroke-width="0.9"/></svg>
<div class="t" style="left:331.30px;top:371.19px;font-size:8.4px;line-height:8.4px;font-weight:400;color:#dedede;-webkit-text-stroke:0.3px #dedede;">Shared</div>
<div class="t" style="left:312.60px;top:397.06px;font-size:6.9px;line-height:6.9px;font-weight:700;color:#7b7777;">Favorites</div>
<svg style="position:absolute;left:315.5px;top:409.5px;" width="12" height="12" viewBox="0 0 12 12"><circle cx="5.6" cy="5.6" r="5" fill="none" stroke="#d8d8d8" stroke-width="1"/><path d="M5.6 2.8 L5.6 8 M3.6 6 L5.6 8 L7.6 6" fill="none" stroke="#d8d8d8" stroke-width="1"/></svg>
<div class="t" style="left:331.30px;top:411.29px;font-size:8.4px;line-height:8.4px;font-weight:400;color:#dedede;-webkit-text-stroke:0.3px #dedede;">Downloads</div>
<svg style="position:absolute;left:315px;top:430px;" width="12" height="11" viewBox="0 0 12 11"><path d="M1 10 L7 0.8 M4.2 0.8 L10.4 10 M1.2 6.6 L10.6 6.6" fill="none" stroke="#d8d8d8" stroke-width="1.1"/></svg>
<div class="t" style="left:331.30px;top:431.29px;font-size:8.4px;line-height:8.4px;font-weight:400;color:#dedede;-webkit-text-stroke:0.3px #dedede;">Applications</div>
<svg style="position:absolute;left:314px;top:449.5px;" width="14" height="11" viewBox="0 0 14 11"><rect x="0.7" y="0.7" width="12" height="9.2" rx="1.2" fill="none" stroke="#d8d8d8" stroke-width="1"/><path d="M0.7 3 L12.7 3 M2.8 7.4 L10.6 7.4" stroke="#d8d8d8" stroke-width="1"/></svg>
<div class="t" style="left:331.30px;top:451.29px;font-size:8.4px;line-height:8.4px;font-weight:400;color:#dedede;-webkit-text-stroke:0.3px #dedede;">Desktop</div>
<svg style="position:absolute;left:375px;top:452px;" width="11.4" height="9.8" viewBox="0 0 11.4 9.8"><path d="M2.2 6.8 Q0.5 6.8 0.5 5.0 Q0.5 3.1999999999999997 2.4 3.0 Q3 0.6 5.6 0.6 Q8.2 0.6 8.6 3.0 Q10.4 3.1999999999999997 10.4 5.0 Q10.4 6.8 8.4 6.8 Z" fill="none" stroke="#6a6666" stroke-width="0.9"/></svg>
<div style="position:absolute;left:309.4px;top:465.4px;width:79.80000000000001px;height:19.600000000000023px;background:#363535;border-radius:5px;"></div>
<svg style="position:absolute;left:316px;top:470px;" width="11" height="12" viewBox="0 0 11 12"><path d="M0.7 0.7 L6.4 0.7 L9.6 3.9 L9.6 10.8 L0.7 10.8 Z M6.4 0.7 L6.4 3.9 L9.6 3.9" fill="none" stroke="#4f86de" stroke-width="1" stroke-linejoin="round"/></svg>
<div class="t" style="left:331.30px;top:471.19px;font-size:8.4px;line-height:8.4px;font-weight:400;color:#5a8de0;-webkit-text-stroke:0.3px #5a8de0;">Docume...</div>
<svg style="position:absolute;left:375px;top:472px;" width="11.4" height="9.8" viewBox="0 0 11.4 9.8"><path d="M2.2 6.8 Q0.5 6.8 0.5 5.0 Q0.5 3.1999999999999997 2.4 3.0 Q3 0.6 5.6 0.6 Q8.2 0.6 8.6 3.0 Q10.4 3.1999999999999997 10.4 5.0 Q10.4 6.8 8.4 6.8 Z" fill="none" stroke="#6e6a6a" stroke-width="0.9"/></svg>
<div class="t" style="left:312.60px;top:497.46px;font-size:6.9px;line-height:6.9px;font-weight:700;color:#7b7777;">Locations</div>
<svg style="position:absolute;left:314.5px;top:510.5px;" width="15" height="10" viewBox="0 0 15 10"><path d="M3 9 Q0.6 9 0.6 6.6 Q0.6 4.4 3 4.2 Q3.8 0.6 7.4 0.6 Q10.8 0.6 11.4 4 Q13.8 4.2 13.8 6.6 Q13.8 9 11.4 9 Z" fill="none" stroke="#d8d8d8" stroke-width="1"/></svg>
<div class="t" style="left:331.30px;top:511.89px;font-size:8.4px;line-height:8.4px;font-weight:400;color:#dedede;-webkit-text-stroke:0.3px #dedede;">iCloud Drive</div>
<svg style="position:absolute;left:314.5px;top:529.5px;" width="13" height="12" viewBox="0 0 13 12"><path d="M0.8 5.4 L6.2 0.8 L11.6 5.4 M2 4.4 L2 10.6 L10.4 10.6 L10.4 4.4 M5 10.6 L5 7 L7.4 7 L7.4 10.6" fill="none" stroke="#d8d8d8" stroke-width="1.1" stroke-linejoin="round"/></svg>
<div class="t" style="left:331.30px;top:531.69px;font-size:8.4px;line-height:8.4px;font-weight:400;color:#dedede;-webkit-text-stroke:0.3px #dedede;">macaz</div>
<div style="position:absolute;left:314px;top:548.3px;width:14px;height:14px;border-radius:3.5px;background:conic-gradient(from 0deg,#ff4d6d,#ffb000,#8fe04a,#34c8ff,#6b5bff,#ff4dd2,#ff4d6d);"></div>
<div style="position:absolute;left:317.2px;top:551.5px;width:7.6px;height:7.6px;border-radius:50%;border:1.2px solid rgba(255,255,255,0.85);box-sizing:border-box;"></div>
<div class="t" style="left:331.30px;top:551.69px;font-size:8.4px;line-height:8.4px;font-weight:400;color:#dedede;-webkit-text-stroke:0.3px #dedede;">Data</div>
<svg style="position:absolute;left:376.6px;top:552.4px;" width="7" height="7" viewBox="0 0 7 7"><path d="M0.4 3.8 L3.4 0.4 L6.4 3.8 Z M0.4 5.2 L6.4 5.2 L6.4 6.6 L0.4 6.6 Z" fill="#6e6a6a"/></svg>
<div class="t" style="left:312.80px;top:577.76px;font-size:6.9px;line-height:6.9px;font-weight:700;color:#7b7777;">Tags</div>
<svg style="position:absolute;left:317px;top:591.8px;" width="9" height="9" viewBox="0 0 9 9"><circle cx="4.2" cy="4.2" r="4.1" fill="#f2574f"/></svg>
<div class="t" style="left:331.30px;top:591.89px;font-size:8.4px;line-height:8.4px;font-weight:400;color:#dedede;-webkit-text-stroke:0.3px #dedede;">Red</div>
<svg style="position:absolute;left:317px;top:611.8px;" width="9" height="9" viewBox="0 0 9 9"><circle cx="4.2" cy="4.2" r="4.1" fill="#f9b51e"/></svg>
<div class="t" style="left:331.30px;top:612.09px;font-size:8.4px;line-height:8.4px;font-weight:400;color:#dedede;-webkit-text-stroke:0.3px #dedede;">Orange</div>
<div style="position:absolute;left:408.4px;top:346.2px;width:29.600000000000023px;height:14.400000000000034px;background:#2c2b2b;border-radius:5px;"></div>
<svg style="position:absolute;left:412px;top:348.5px;" width="24" height="10" viewBox="0 0 24 10"><path d="M5 1 L1.6 5 L5 9" fill="none" stroke="#cfcfcf" stroke-width="1.1" stroke-linecap="round"/><path d="M17 1 L20.4 5 L17 9" fill="none" stroke="#6a6a6a" stroke-width="1.1" stroke-linecap="round"/><path d="M11.6 0.5 L11.6 9.5" stroke="#3e3e3e" stroke-width="0.8"/></svg>
<div style="position:absolute;left:443.3px;top:346.2px;width:41.39999999999998px;height:14.400000000000034px;background:#2c2b2b;border-radius:5px;"></div>
<svg style="position:absolute;left:451.5px;top:349px;" width="10" height="9" viewBox="0 0 10 9"><circle cx="2.3" cy="2.3" r="1.7" fill="none" stroke="#cfcfcf" stroke-width="0.9"/><circle cx="6.9" cy="2.3" r="1.7" fill="none" stroke="#cfcfcf" stroke-width="0.9"/><circle cx="2.3" cy="6.7" r="1.7" fill="none" stroke="#cfcfcf" stroke-width="0.9"/><circle cx="6.9" cy="6.7" r="1.7" fill="none" stroke="#cfcfcf" stroke-width="0.9"/></svg>
<svg style="position:absolute;left:473px;top:351px;" width="6.800000000000011" height="5" viewBox="0 0 6.800000000000011 5"><path d="M1.7 1.5 L3.4000000000000057 3.6 L5.100000000000011 1.5" fill="none" stroke="#cfcfcf" stroke-width="1.1" stroke-linecap="round" stroke-linejoin="round"/></svg>
<div style="position:absolute;left:490px;top:346.2px;width:40.60000000000002px;height:14.400000000000034px;background:#2c2b2b;border-radius:5px;"></div>
<svg style="position:absolute;left:497.8px;top:348.5px;" width="10" height="10" viewBox="0 0 10 10"><path d="M0.5 1.5 L9.5 1.5 M0.5 3.8 L9.5 3.8 M0.5 6.1 L9.5 6.1 M0.5 8.4 L9.5 8.4 M1.5 0.5 L1.5 9.5 M3.8 0.5 L3.8 9.5 M6.1 0.5 L6.1 9.5 M8.4 0.5 L8.4 9.5" stroke="#bdbdbd" stroke-width="0.7"/></svg>
<svg style="position:absolute;left:519.2px;top:351px;" width="6.7999999999999545" height="5" viewBox="0 0 6.7999999999999545 5"><path d="M1.7 1.5 L3.3999999999999773 3.6 L5.099999999999954 1.5" fill="none" stroke="#cfcfcf" stroke-width="1.1" stroke-linecap="round" stroke-linejoin="round"/></svg>
<div style="position:absolute;left:536.5px;top:346.5px;width:143.5px;height:14.300000000000011px;background:#2c2b2b;border-radius:5px;"></div>
<svg style="position:absolute;left:543.6px;top:349.6px;" width="10" height="8.2" viewBox="0 0 10 8.2"><path d="M0.4 1 Q0.4 0.3 1.1 0.3 L3.6 0.3 L4.6 1.4 L8.6 1.4 Q9.4 1.4 9.4 2.2 L9.4 7.4 Q9.4 8 8.8 8 L1 8 Q0.4 8 0.4 7.4 Z" fill="#5aaeea"/><path d="M0.4 2.6 L9.4 2.6" stroke="#8fcaf4" stroke-width="0.6"/></svg>
<div class="t" style="left:554.30px;top:349.80px;font-size:8.5px;line-height:8.5px;font-weight:400;color:#dcdcdc;-webkit-text-stroke:0.3px #dcdcdc;">Documents</div>
<svg style="position:absolute;left:668.6px;top:348.8px;" width="7" height="10" viewBox="0 0 7 10"><path d="M1 3.4 L3.2 1 L5.4 3.4 M1 6.4 L3.2 8.8 L5.4 6.4" fill="none" stroke="#cfcfcf" stroke-width="1" stroke-linecap="round"/></svg>
<div style="position:absolute;left:684.7px;top:345.5px;width:124.29999999999995px;height:16.100000000000023px;background:#222121;border-radius:5px;box-shadow:inset 0 0 0 0.6px #2f2e2e;"></div>
<svg style="position:absolute;left:688.8px;top:349.6px;" width="9" height="9" viewBox="0 0 9 9"><circle cx="3.6" cy="3.6" r="3" fill="none" stroke="#9a9a9a" stroke-width="1"/><path d="M5.8 5.8 L8.2 8.2" stroke="#9a9a9a" stroke-width="1.1" stroke-linecap="round"/></svg>
<div class="t" style="left:700.00px;top:350.09px;font-size:8.4px;line-height:8.4px;font-weight:400;color:#8c8c8c;-webkit-text-stroke:0.25px #8c8c8c;">Search</div>
<div style="position:absolute;left:395.6px;top:372.8px;width:419.4px;height:0.8000000000000114px;background:#2e2d2d;"></div>
<div style="position:absolute;left:426.8px;top:391.5px;width:35.4px;height:35.4px;background:#fff;border-radius:3px;overflow:hidden;"><div style="position:absolute;left:4.70px;top:4.70px;width:26px;height:26px;background:#d9262c;border-radius:2.6px;transform:rotate(28.6deg);"></div></div>
<div class="t" style="left:421.20px;top:435.31px;font-size:7.9px;line-height:7.9px;font-weight:400;color:#e2e2e2;-webkit-text-stroke:0.2px #e2e2e2;">small.png</div>
<svg style="position:absolute;left:458.2px;top:435px;" width="8.6" height="7.8" viewBox="0 0 8.6 7.8"><path d="M2.2 4.8 Q0.5 4.8 0.5 3.0 Q0.5 1.1999999999999997 2.4 1.0 Q3 0.6 5.6 0.6 Q8.2 0.6 8.6 1.0 Q7.6 1.1999999999999997 7.6 3.0 Q7.6 4.8 8.4 4.8 Z" fill="none" stroke="#9a9a9a" stroke-width="0.9"/><path d="M4.1 2.8 L4.1 6.4" stroke="#9a9a9a" stroke-width="0.9"/></svg>
<div style="position:absolute;left:508.2px;top:391.5px;width:35.4px;height:35.4px;background:#fff;border-radius:3px;overflow:hidden;"><div style="position:absolute;left:4.50px;top:4.50px;width:26.4px;height:26.4px;background:#d9262c;border-radius:2.6px;transform:rotate(28.6deg);"></div></div>
<div class="t" style="left:497.40px;top:435.31px;font-size:7.9px;line-height:7.9px;font-weight:400;color:#e2e2e2;-webkit-text-stroke:0.2px #e2e2e2;">medium.png</div>
<svg style="position:absolute;left:544.6px;top:435px;" width="8.6" height="7.8" viewBox="0 0 8.6 7.8"><path d="M2.2 4.8 Q0.5 4.8 0.5 3.0 Q0.5 1.1999999999999997 2.4 1.0 Q3 0.6 5.6 0.6 Q8.2 0.6 8.6 1.0 Q7.6 1.1999999999999997 7.6 3.0 Q7.6 4.8 8.4 4.8 Z" fill="none" stroke="#9a9a9a" stroke-width="0.9"/><path d="M4.1 2.8 L4.1 6.4" stroke="#9a9a9a" stroke-width="0.9"/></svg>
<div style="position:absolute;left:590.6px;top:391.5px;width:35.4px;height:35.4px;background:#fff;border-radius:3px;overflow:hidden;"><div style="position:absolute;left:2.95px;top:2.95px;width:29.5px;height:29.5px;background:#d9262c;border-radius:2.6px;transform:rotate(28.6deg);"></div></div>
<div class="t" style="left:584.80px;top:435.31px;font-size:7.9px;line-height:7.9px;font-weight:400;color:#e2e2e2;-webkit-text-stroke:0.2px #e2e2e2;">large.png</div>
<svg style="position:absolute;left:621.8px;top:435px;" width="8.6" height="7.8" viewBox="0 0 8.6 7.8"><path d="M2.2 4.8 Q0.5 4.8 0.5 3.0 Q0.5 1.1999999999999997 2.4 1.0 Q3 0.6 5.6 0.6 Q8.2 0.6 8.6 1.0 Q7.6 1.1999999999999997 7.6 3.0 Q7.6 4.8 8.4 4.8 Z" fill="none" stroke="#9a9a9a" stroke-width="0.9"/><path d="M4.1 2.8 L4.1 6.4" stroke="#9a9a9a" stroke-width="0.9"/></svg>
<div style="position:absolute;left:672.2px;top:397px;width:34.89999999999998px;height:25.100000000000023px;background:linear-gradient(170deg,#f6f2e6 0%,#f0ebdc 70%,#e9e6e4 100%);border-radius:3px;"></div>
<div class="t" style="left:657.10px;top:435.31px;font-size:7.9px;line-height:7.9px;font-weight:400;color:#e2e2e2;-webkit-text-stroke:0.2px #e2e2e2;">3-layers-2.png</div>
<svg style="position:absolute;left:713.2px;top:435px;" width="8.6" height="7.8" viewBox="0 0 8.6 7.8"><path d="M2.2 4.8 Q0.5 4.8 0.5 3.0 Q0.5 1.1999999999999997 2.4 1.0 Q3 0.6 5.6 0.6 Q8.2 0.6 8.6 1.0 Q7.6 1.1999999999999997 7.6 3.0 Q7.6 4.8 8.4 4.8 Z" fill="none" stroke="#9a9a9a" stroke-width="0.9"/><path d="M4.1 2.8 L4.1 6.4" stroke="#9a9a9a" stroke-width="0.9"/></svg>
<div style="position:absolute;left:753.2px;top:396.4px;width:36.0px;height:25.80000000000001px;background:linear-gradient(170deg,#f6f2e6 0%,#eeeaf0 70%,#e6e4ee 100%);border-radius:3px;"></div>
<div class="t" style="left:738.90px;top:435.31px;font-size:7.9px;line-height:7.9px;font-weight:400;color:#e2e2e2;-webkit-text-stroke:0.2px #e2e2e2;">3-layers-1.png</div>
<svg style="position:absolute;left:793.8px;top:435px;" width="8.6" height="7.8" viewBox="0 0 8.6 7.8"><path d="M2.2 4.8 Q0.5 4.8 0.5 3.0 Q0.5 1.1999999999999997 2.4 1.0 Q3 0.6 5.6 0.6 Q8.2 0.6 8.6 1.0 Q7.6 1.1999999999999997 7.6 3.0 Q7.6 4.8 8.4 4.8 Z" fill="none" stroke="#9a9a9a" stroke-width="0.9"/><path d="M4.1 2.8 L4.1 6.4" stroke="#9a9a9a" stroke-width="0.9"/></svg>
<div style="position:absolute;left:425.8px;top:475.6px;width:14px;height:6px;background:#4597d6;border-radius:2px 3px 0 0;"></div>
<div style="position:absolute;left:425.8px;top:478.2px;width:37.2px;height:27.7px;background:#4597d6;border-radius:2px;"></div>
<div style="position:absolute;left:425.8px;top:480.4px;width:37.2px;height:25.5px;background:linear-gradient(180deg,#6cc1f5 0%,#5cb0ec 55%,#4fa3e2 100%);border-radius:1.5px 1.5px 2px 2px;border-top:1px solid #c8e8fb;box-sizing:border-box;"></div>
<div class="t" style="left:426.60px;top:516.91px;font-size:7.9px;line-height:7.9px;font-weight:400;color:#e2e2e2;-webkit-text-stroke:0.2px #e2e2e2;">Adobe</div>
<svg style="position:absolute;left:452.8px;top:517.4px;" width="8.6" height="7.8" viewBox="0 0 8.6 7.8"><path d="M2.2 4.8 Q0.5 4.8 0.5 3.0 Q0.5 1.1999999999999997 2.4 1.0 Q3 0.6 5.6 0.6 Q8.2 0.6 8.6 1.0 Q7.6 1.1999999999999997 7.6 3.0 Q7.6 4.8 8.4 4.8 Z" fill="none" stroke="#9a9a9a" stroke-width="0.9"/><path d="M4.1 2.8 L4.1 6.4" stroke="#9a9a9a" stroke-width="0.9"/></svg>
<div style="position:absolute;left:507.5px;top:475.6px;width:14px;height:6px;background:#4597d6;border-radius:2px 3px 0 0;"></div>
<div style="position:absolute;left:507.5px;top:478.2px;width:37.2px;height:27.7px;background:#4597d6;border-radius:2px;"></div>
<div style="position:absolute;left:507.5px;top:480.4px;width:37.2px;height:25.5px;background:linear-gradient(180deg,#6cc1f5 0%,#5cb0ec 55%,#4fa3e2 100%);border-radius:1.5px 1.5px 2px 2px;border-top:1px solid #c8e8fb;box-sizing:border-box;"></div>
<div class="t" style="left:499.60px;top:516.74px;font-size:8.1px;line-height:8.1px;font-weight:400;color:#e2e2e2;-webkit-text-stroke:0.2px #e2e2e2;">Custom Office</div>
<div class="t" style="left:507.90px;top:527.00px;font-size:7.8px;line-height:7.8px;font-weight:400;color:#e2e2e2;-webkit-text-stroke:0.2px #e2e2e2;">Templates</div>
<div style="position:absolute;left:589.6px;top:475.6px;width:14px;height:6px;background:#4597d6;border-radius:2px 3px 0 0;"></div>
<div style="position:absolute;left:589.6px;top:478.2px;width:37.2px;height:27.7px;background:#4597d6;border-radius:2px;"></div>
<div style="position:absolute;left:589.6px;top:480.4px;width:37.2px;height:25.5px;background:linear-gradient(180deg,#6cc1f5 0%,#5cb0ec 55%,#4fa3e2 100%);border-radius:1.5px 1.5px 2px 2px;border-top:1px solid #c8e8fb;box-sizing:border-box;"></div>
<div class="t" style="left:586.10px;top:516.91px;font-size:7.9px;line-height:7.9px;font-weight:400;color:#e2e2e2;-webkit-text-stroke:0.2px #e2e2e2;">Maxprog</div>
<svg style="position:absolute;left:620.4px;top:517.4px;" width="8.6" height="7.8" viewBox="0 0 8.6 7.8"><path d="M2.2 4.8 Q0.5 4.8 0.5 3.0 Q0.5 1.1999999999999997 2.4 1.0 Q3 0.6 5.6 0.6 Q8.2 0.6 8.6 1.0 Q7.6 1.1999999999999997 7.6 3.0 Q7.6 4.8 8.4 4.8 Z" fill="none" stroke="#9a9a9a" stroke-width="0.9"/><path d="M4.1 2.8 L4.1 6.4" stroke="#9a9a9a" stroke-width="0.9"/></svg>
<div style="position:absolute;left:395.6px;top:594px;width:419.4px;height:0.7999999999999545px;background:#2e2d2d;"></div>
<div style="position:absolute;left:407.9px;top:608px;width:73.30000000000001px;height:15.100000000000023px;background:#353434;border-radius:4px;"></div>
<div class="t" style="left:418.30px;top:611.29px;font-size:8.4px;line-height:8.4px;font-weight:400;color:#e0e0e0;-webkit-text-stroke:0.3px #e0e0e0;">Show Options</div>
<div style="position:absolute;left:710.7px;top:608.5px;width:45.69999999999993px;height:14.299999999999955px;background:#353434;border-radius:4px;"></div>
<div class="t" style="left:720.30px;top:611.29px;font-size:8.4px;line-height:8.4px;font-weight:400;color:#e6e6e6;-webkit-text-stroke:0.3px #e6e6e6;">Cancel</div>
<div style="position:absolute;left:762px;top:608.5px;width:45.299999999999955px;height:14.299999999999955px;background:#262525;border-radius:4px;"></div>
<div class="t" style="left:773.80px;top:611.29px;font-size:8.4px;line-height:8.4px;font-weight:400;color:#5a5858;-webkit-text-stroke:0.2px #5a5858;">Insert</div>
</div>
</body></html>
